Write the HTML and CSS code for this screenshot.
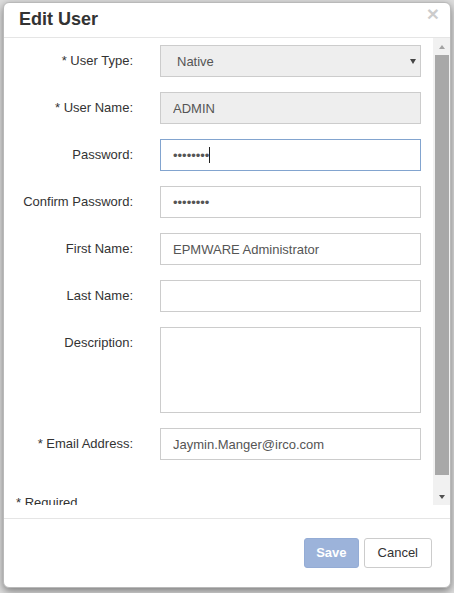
FILE: index.html
```html
<!DOCTYPE html>
<html lang="en">
<head>
<meta charset="utf-8">
<title>Edit User</title>
<link rel="stylesheet" href="styles.css">
</head>
<body>
<div class="modal">
  <div class="modal-header">
    <h4 class="modal-title">Edit User</h4>
    <span class="close">&times;</span>
  </div>
  <div class="modal-body">
    <div class="body-scroll">
      <form class="form">
        <div class="row">
          <label class="label">* User Type:</label>
          <div class="select-wrap"><select class="control select" disabled><option>Native</option></select></div>
        </div>
        <div class="row">
          <label class="label">* User Name:</label>
          <input class="control readonly" type="text" value="ADMIN" readonly>
        </div>
        <div class="row">
          <label class="label">Password:</label>
          <div class="caret-wrap"><input class="control focused" type="password" value="password"></div>
        </div>
        <div class="row">
          <label class="label">Confirm Password:</label>
          <input class="control" type="password" value="password">
        </div>
        <div class="row">
          <label class="label">First Name:</label>
          <input class="control" type="text" value="EPMWARE Administrator">
        </div>
        <div class="row">
          <label class="label">Last Name:</label>
          <input class="control" type="text" value="">
        </div>
        <div class="row">
          <label class="label">Description:</label>
          <textarea class="control textarea"></textarea>
        </div>
        <div class="row">
          <label class="label">* Email Address:</label>
          <input class="control" type="text" value="Jaymin.Manger@irco.com">
        </div>
      </form>
      <p class="required">* Required</p>
    </div>
    <div class="scrollbar" aria-hidden="true">
      <div class="sb-btn sb-up"></div>
      <div class="sb-track"><div class="sb-thumb"></div></div>
      <div class="sb-btn sb-down"></div>
    </div>
  </div>
  <div class="modal-spacer"></div>
  <div class="modal-footer">
    <button class="btn btn-primary" type="button" disabled>Save</button>
    <button class="btn btn-default" type="button">Cancel</button>
  </div>
</div>
</body>
</html>
```
FILE: styles.css
```css
html, body {
  margin: 0;
  padding: 0;
}
body {
  background: #dedede;
  font-family: "Liberation Sans", Arial, sans-serif;
  font-size: 13px;
  color: #333;
  width: 454px;
  height: 593px;
  overflow: hidden;
  padding-top: 2px;
  padding-left: 3px;
  box-sizing: border-box;
}
.modal {
  width: 448px;
  height: 586px;
  box-sizing: border-box;
  background: #fff;
  border: 1px solid #b9b9b9;
  border-radius: 6px;
  box-shadow: 0 3px 9px rgba(0, 0, 0, 0.45);
  display: flex;
  flex-direction: column;
  overflow: hidden;
}
.modal-header {
  display: flex;
  justify-content: space-between;
  align-items: flex-start;
  padding: 6px 11px 8px 15px;
  border-bottom: 1px solid #e5e5e5;
}
.modal-title {
  margin: 0;
  font-size: 18px;
  line-height: 20px;
  font-weight: bold;
  color: #333;
}
.close {
  font-size: 21px;
  font-weight: bold;
  line-height: 20px;
  margin-top: -5px;
  color: #000;
  opacity: 0.2;
}
.modal-body {
  height: 467px;
  flex: none;
  display: flex;
  overflow: hidden;
}
.body-scroll {
  flex: 1;
  overflow: hidden;
  padding-top: 7px;
}
.scrollbar {
  width: 17px;
  flex: none;
  background: #f1f1f1;
  display: flex;
  flex-direction: column;
}
.sb-btn {
  height: 17px;
  flex: none;
  display: flex;
  align-items: center;
  justify-content: center;
}
.sb-up::before {
  content: "";
  border-left: 3.5px solid transparent;
  border-right: 3.5px solid transparent;
  border-bottom: 4px solid #a3a3a3;
}
.sb-down::before {
  content: "";
  border-left: 3.5px solid transparent;
  border-right: 3.5px solid transparent;
  border-top: 4px solid #505050;
}
.sb-track {
  flex: 1;
  padding: 0 1px 0 2px;
}
.sb-thumb {
  height: 420px;
  background: #a8a8a8;
}
.form {
  margin: 0;
}
.row {
  display: grid;
  grid-template-columns: 129px 261px;
  column-gap: 27px;
  margin-bottom: 15px;
  align-items: start;
}
.label {
  text-align: right;
  padding-top: 7px;
  line-height: 18px;
  color: #333;
}
.control {
  display: block;
  width: 261px;
  height: 32px;
  box-sizing: border-box;
  margin: 0;
  padding: 6px 12px;
  border: 1px solid #cccccc;
  border-radius: 0;
  background: #fff;
  font-family: "Liberation Sans", Arial, sans-serif;
  font-size: 13px;
  color: #555;
  outline: none;
}
.readonly {
  background: #eeeeee;
}
.focused {
  border-color: #82a4cf;
}
.select-wrap {
  position: relative;
}
.select {
  appearance: none;
  -webkit-appearance: none;
  background: #eeeeee;
  padding-left: 16px;
  opacity: 1;
  color: #555;
}
.select-wrap::after {
  content: "";
  position: absolute;
  right: 5px;
  top: 14px;
  border-left: 3.5px solid transparent;
  border-right: 3.5px solid transparent;
  border-top: 5px solid #444;
}
.caret-wrap {
  position: relative;
}
.caret-wrap::after {
  content: "";
  position: absolute;
  left: 49px;
  top: 8px;
  width: 1px;
  height: 16px;
  background: #222;
}
.textarea {
  height: 86px;
  resize: none;
}
.required {
  margin: 34px 0 0 12px;
  line-height: 18px;
  color: #333;
}
.modal-spacer {
  height: 13px;
  flex: none;
}
.modal-footer {
  flex: 1;
  border-top: 1px solid #e5e5e5;
  display: flex;
  justify-content: flex-end;
  align-items: flex-start;
  gap: 5px;
  padding: 19px 18px 0 0;
}
.btn {
  height: 30px;
  box-sizing: border-box;
  padding: 0 13px;
  border-radius: 3px;
  font-family: "Liberation Sans", Arial, sans-serif;
  font-size: 13px;
  line-height: 28px;
}
.btn-primary {
  background: #9cb3da;
  border: 1px solid #94acd5;
  color: #fff;
  font-weight: bold;
  padding: 0 11px;
}
.btn-default {
  background: #fff;
  border: 1px solid #cccccc;
  color: #333;
}
```
